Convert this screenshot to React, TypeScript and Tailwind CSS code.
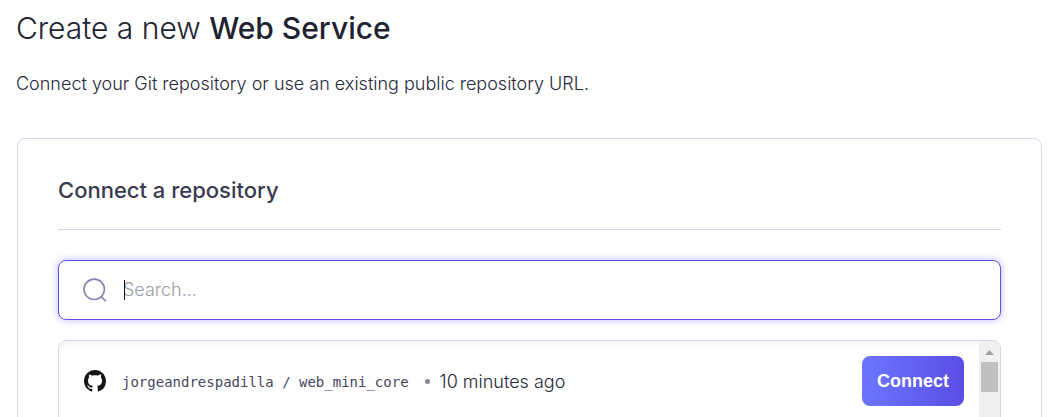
import { useState } from "react";

type Repository = { owner: string; name: string; updated: string };

const repositories: Repository[] = [
  { owner: "jorgeandrespadilla", name: "web_mini_core", updated: "10 minutes ago" },
];

function SearchIcon() {
  return (
    <svg className="size-6 shrink-0" viewBox="0 0 24 24" fill="none" stroke="#8583ae" strokeWidth="1.6" aria-hidden="true">
      <circle cx="11.2" cy="11.3" r="10.2" />
      <path d="M18.2 18.6l4.6 4.6" />
    </svg>
  );
}

function GitHubIcon() {
  return (
    <svg className="size-[22px] shrink-0" viewBox="0 0 16 16" fill="#151515" aria-hidden="true">
      <path d="M8 0C3.58 0 0 3.58 0 8c0 3.54 2.29 6.53 5.47 7.59.4.07.55-.17.55-.38 0-.19-.01-.82-.01-1.49-2.01.37-2.53-.49-2.69-.94-.09-.23-.48-.94-.82-1.13-.28-.15-.68-.52-.01-.53.63-.01 1.08.58 1.23.82.72 1.21 1.87.87 2.33.66.07-.52.28-.87.51-1.07-1.78-.2-3.64-.89-3.64-3.95 0-.87.31-1.59.82-2.15-.08-.2-.36-1.02.08-2.12 0 0 .67-.21 2.2.82.64-.18 1.32-.27 2-.27s1.36.09 2 .27c1.53-1.04 2.2-.82 2.2-.82.44 1.1.16 1.92.08 2.12.51.56.82 1.27.82 2.15 0 3.07-1.87 3.75-3.65 3.95.29.25.54.73.54 1.48 0 1.07-.01 1.93-.01 2.2 0 .21.15.46.55.38A8.01 8.01 0 0 0 16 8c0-4.42-3.58-8-8-8z" />
    </svg>
  );
}

function ScrollTrack() {
  return (
    <div className="flex w-[21px] shrink-0 flex-col items-center bg-[#f0f0f0]" aria-hidden="true">
      <svg className="h-[21px] w-[21px]" viewBox="0 0 21 21" fill="#a0a0a0">
        <path d="M6 14h9l-4.5-5z" />
      </svg>
      <div className="h-[30px] w-[17px] bg-[#c0c0c0]" />
    </div>
  );
}

export default function App() {
  const [query, setQuery] = useState("");
  const shown = repositories.filter((r) => `${r.owner}/${r.name}`.includes(query));

  return (
    <main className="h-screen overflow-hidden bg-white pt-2 pr-5 pl-4 font-['Inter',sans-serif] text-[#27283a]">
      <h1 className="text-[30px] leading-10 font-light text-[#202230]">
        Create a new <strong className="font-medium">Web Service</strong>
      </h1>
      <p className="mt-6 text-[18px] leading-6 font-light">
        Connect your Git repository or use an existing public repository URL.
      </p>

      <section className="mt-[42px] ml-px rounded-lg border border-[#cfdaf0] px-10 pt-9 pb-10" aria-labelledby="connect-title">
        <h2 id="connect-title" className="border-b border-[#cfd8ec] pb-6 text-[22px] leading-[30px] font-medium text-[#393b4f]">
          Connect a repository
        </h2>

        <label className="relative mt-[30px] flex h-[60px] items-center gap-4 rounded-lg border border-[#5b4ee8] px-6 shadow-[0_0_7px_1px_#c9c8ff]">
          <SearchIcon />
          <input
            type="text"
            aria-label="Search"
            placeholder="Search..."
            value={query}
            onChange={(e) => setQuery(e.target.value)}
            className="min-w-0 flex-1 bg-transparent text-[18px] leading-6 font-light outline-none placeholder:text-[#9b9ca8]"
          />
          <span className="absolute top-[19px] left-[65px] h-5 w-px bg-[#111118]" aria-hidden="true" />
        </label>

        <div className="mt-5 flex min-h-60 overflow-hidden rounded-lg border border-[#cfdaf0] shadow-[inset_0_3px_5px_#f3f3f6]">
          <ul className="min-w-0 flex-1">
            {shown.map((repo) => (
              <li key={repo.name} className="flex items-center py-[15px] pr-[15px] pl-[25px]">
                <GitHubIcon />
                <div className="flex items-center pt-px">
                  <span className="ml-4 font-['DejaVu_Sans_Mono',monospace] text-[14px] leading-6 text-[#45475f]">
                    {repo.owner} / {repo.name}
                  </span>
                  <span className="mr-[10px] ml-4 size-[5px] rounded-full bg-[#85879b]" />
                  <span className="text-[18px] leading-6 font-light">{repo.updated}</span>
                </div>
                <button
                  type="button"
                  className="ml-auto h-[50px] rounded-lg bg-linear-to-r from-[#6c75ff] to-[#5a4de6] px-[15px] pt-px font-['Liberation_Sans',sans-serif] text-[18px] font-bold text-white"
                >
                  Connect
                </button>
              </li>
            ))}
          </ul>
          <ScrollTrack />
        </div>
      </section>
    </main>
  );
}
